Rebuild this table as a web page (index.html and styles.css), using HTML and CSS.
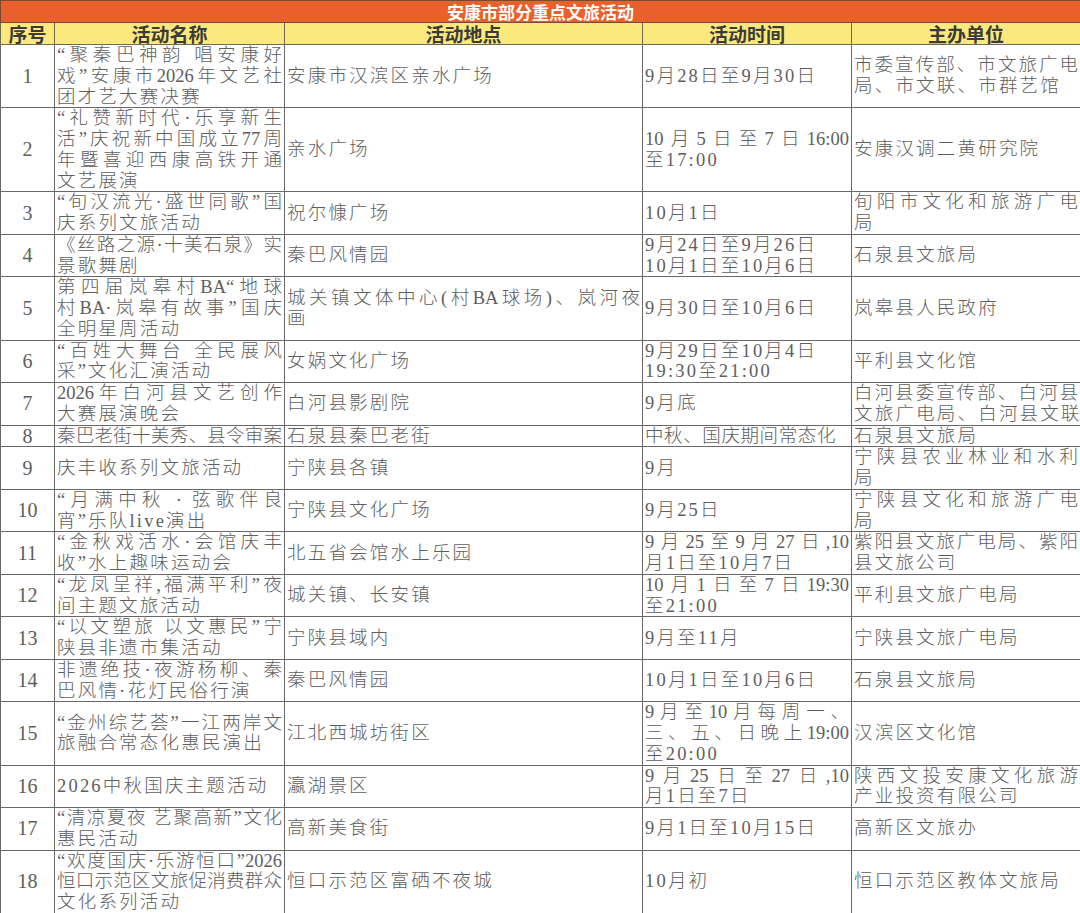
FILE: index.html
```html
<!DOCTYPE html>
<html lang="zh-CN">
<head>
<meta charset="utf-8">
<title>安康市部分重点文旅活动</title>
<link rel="stylesheet" href="styles.css">
</head>
<body>
<table class="sheet">
  <colgroup>
    <col class="c-no"><col class="c-name"><col class="c-place"><col class="c-time"><col class="c-org">
  </colgroup>
  <thead>
    <tr class="title-row"><th colspan="5">安康市部分重点文旅活动</th></tr>
    <tr class="head-row"><th>序号</th><th>活动名称</th><th>活动地点</th><th>活动时间</th><th>主办单位</th></tr>
  </thead>
  <tbody>
    <tr>
      <td class="no">1</td>
      <td><span class="j">“聚秦巴神韵 唱安康好</span><span class="j">戏”安康市2026年文艺社</span><span class="l">团才艺大赛决赛</span></td>
      <td>安康市汉滨区亲水广场</td>
      <td>9月28日至9月30日</td>
      <td><span class="j">市委宣传部、市文旅广电</span><span class="l">局、市文联、市群艺馆</span></td>
    </tr>
    <tr>
      <td class="no">2</td>
      <td><span class="j">“礼赞新时代·乐享新生</span><span class="j">活”庆祝新中国成立77周</span><span class="j">年暨喜迎西康高铁开通</span><span class="l">文艺展演</span></td>
      <td>亲水广场</td>
      <td><span class="j">10月5日至7日16:00</span><span class="l">至17:00</span></td>
      <td>安康汉调二黄研究院</td>
    </tr>
    <tr>
      <td class="no">3</td>
      <td><span class="j">“旬汉流光·盛世同歌”国</span><span class="l">庆系列文旅活动</span></td>
      <td>祝尔慷广场</td>
      <td>10月1日</td>
      <td><span class="j">旬阳市文化和旅游广电</span><span class="l">局</span></td>
    </tr>
    <tr>
      <td class="no">4</td>
      <td><span class="j">《丝路之源·十美石泉》实</span><span class="l">景歌舞剧</span></td>
      <td>秦巴风情园</td>
      <td><span class="l">9月24日至9月26日</span><span class="l">10月1日至10月6日</span></td>
      <td>石泉县文旅局</td>
    </tr>
    <tr>
      <td class="no">5</td>
      <td><span class="j">第四届岚皋村BA“地球</span><span class="j">村BA·岚皋有故事”国庆</span><span class="l">全明星周活动</span></td>
      <td><span class="j">城关镇文体中心(村BA球场)、岚河夜</span><span class="l">画</span></td>
      <td>9月30日至10月6日</td>
      <td>岚皋县人民政府</td>
    </tr>
    <tr>
      <td class="no">6</td>
      <td><span class="j">“百姓大舞台 全民展风</span><span class="l">采”文化汇演活动</span></td>
      <td>女娲文化广场</td>
      <td><span class="l">9月29日至10月4日</span><span class="l">19:30至21:00</span></td>
      <td>平利县文化馆</td>
    </tr>
    <tr>
      <td class="no">7</td>
      <td><span class="j">2026年白河县文艺创作</span><span class="l">大赛展演晚会</span></td>
      <td>白河县影剧院</td>
      <td>9月底</td>
      <td><span class="j">白河县委宣传部、白河县</span><span class="l">文旅广电局、白河县文联</span></td>
    </tr>
    <tr>
      <td class="no">8</td>
      <td><span class="j">秦巴老街十美秀、县令审案</span></td>
      <td>石泉县秦巴老街</td>
      <td><span class="t">中秋、国庆期间常态化</span></td>
      <td>石泉县文旅局</td>
    </tr>
    <tr>
      <td class="no">9</td>
      <td>庆丰收系列文旅活动</td>
      <td>宁陕县各镇</td>
      <td>9月</td>
      <td><span class="j">宁陕县农业林业和水利</span><span class="l">局</span></td>
    </tr>
    <tr>
      <td class="no">10</td>
      <td><span class="j">“月满中秋 · 弦歌伴良</span><span class="l">宵”乐队live演出</span></td>
      <td>宁陕县文化广场</td>
      <td>9月25日</td>
      <td><span class="j">宁陕县文化和旅游广电</span><span class="l">局</span></td>
    </tr>
    <tr>
      <td class="no">11</td>
      <td><span class="j">“金秋戏活水·会馆庆丰</span><span class="l">收”水上趣味运动会</span></td>
      <td>北五省会馆水上乐园</td>
      <td><span class="j">9月25至9月27日,10</span><span class="l">月1日至10月7日</span></td>
      <td><span class="j">紫阳县文旅广电局、紫阳</span><span class="l">县文旅公司</span></td>
    </tr>
    <tr>
      <td class="no">12</td>
      <td><span class="j">“龙凤呈祥,福满平利”夜</span><span class="l">间主题文旅活动</span></td>
      <td>城关镇、长安镇</td>
      <td><span class="j">10月1日至7日19:30</span><span class="l">至21:00</span></td>
      <td>平利县文旅广电局</td>
    </tr>
    <tr>
      <td class="no">13</td>
      <td><span class="j">“以文塑旅 以文惠民”宁</span><span class="l">陕县非遗市集活动</span></td>
      <td>宁陕县域内</td>
      <td>9月至11月</td>
      <td>宁陕县文旅广电局</td>
    </tr>
    <tr>
      <td class="no">14</td>
      <td><span class="j">非遗绝技·夜游杨柳、秦</span><span class="l">巴风情·花灯民俗行演</span></td>
      <td>秦巴风情园</td>
      <td>10月1日至10月6日</td>
      <td>石泉县文旅局</td>
    </tr>
    <tr>
      <td class="no">15</td>
      <td><span class="j">“金州综艺荟”一江两岸文</span><span class="l">旅融合常态化惠民演出</span></td>
      <td>江北西城坊街区</td>
      <td><span class="j">9月至10月每周一、</span><span class="j">三、五、日晚上19:00</span><span class="l">至20:00</span></td>
      <td>汉滨区文化馆</td>
    </tr>
    <tr>
      <td class="no">16</td>
      <td>2026中秋国庆主题活动</td>
      <td>瀛湖景区</td>
      <td><span class="j">9月25日至27日,10</span><span class="l">月1日至7日</span></td>
      <td><span class="j">陕西文投安康文化旅游</span><span class="l">产业投资有限公司</span></td>
    </tr>
    <tr>
      <td class="no">17</td>
      <td><span class="j">“清凉夏夜 艺聚高新”文化</span><span class="l">惠民活动</span></td>
      <td>高新美食街</td>
      <td>9月1日至10月15日</td>
      <td>高新区文旅办</td>
    </tr>
    <tr>
      <td class="no">18</td>
      <td><span class="j">“欢度国庆·乐游恒口”2026</span><span class="j">恒口示范区文旅促消费群众</span><span class="l">文化系列活动</span></td>
      <td>恒口示范区富硒不夜城</td>
      <td>10月初</td>
      <td>恒口示范区教体文旅局</td>
    </tr>
  </tbody>
</table>
</body>
</html>
```

FILE: styles.css
```css
html, body {
  margin: 0;
  padding: 0;
  background: #ffffff;
}

.sheet {
  width: 1080px;
  border-collapse: collapse;
  table-layout: fixed;
  font-family: "Liberation Serif", "Noto Sans CJK SC", serif;
  font-size: 18.5px;
  font-weight: 300;
  color: #5e5e5e;
}

.c-no { width: 54px; }
.c-name { width: 230px; }
.c-place { width: 358px; }
.c-time { width: 209px; }
.c-org { width: 229px; }

.title-row th {
  height: 21px;
  padding: 0;
  background: #e9602d;
  color: #ffffff;
  font-family: "Noto Sans CJK SC", sans-serif;
  font-size: 17px;
  font-weight: 700;
  line-height: 19px;
  text-align: center;
  border: 1px solid #7a4a30;
}

.head-row th {
  height: 21px;
  padding: 0;
  background: #fbe97d;
  color: #3b3b3b;
  font-family: "Noto Sans CJK SC", sans-serif;
  font-size: 19px;
  font-weight: 700;
  line-height: 20px;
  text-align: center;
  border: 1px solid #6f6a52;
}

.sheet td {
  padding: 0 2px;
  border: 1px solid #686868;
  line-height: 20.75px;
  letter-spacing: 2.2px;
  vertical-align: middle;
  text-align: left;
  white-space: nowrap;
  overflow: hidden;
}

.sheet td.no {
  text-align: center;
  padding: 0;
  font-size: 20px;
  letter-spacing: 0;
}

.j {
  display: block;
  white-space: normal;
  letter-spacing: 0;
  text-align: justify;
  text-align-last: justify;
}

.l {
  display: block;
}

.t {
  letter-spacing: 0.6px;
}
```
